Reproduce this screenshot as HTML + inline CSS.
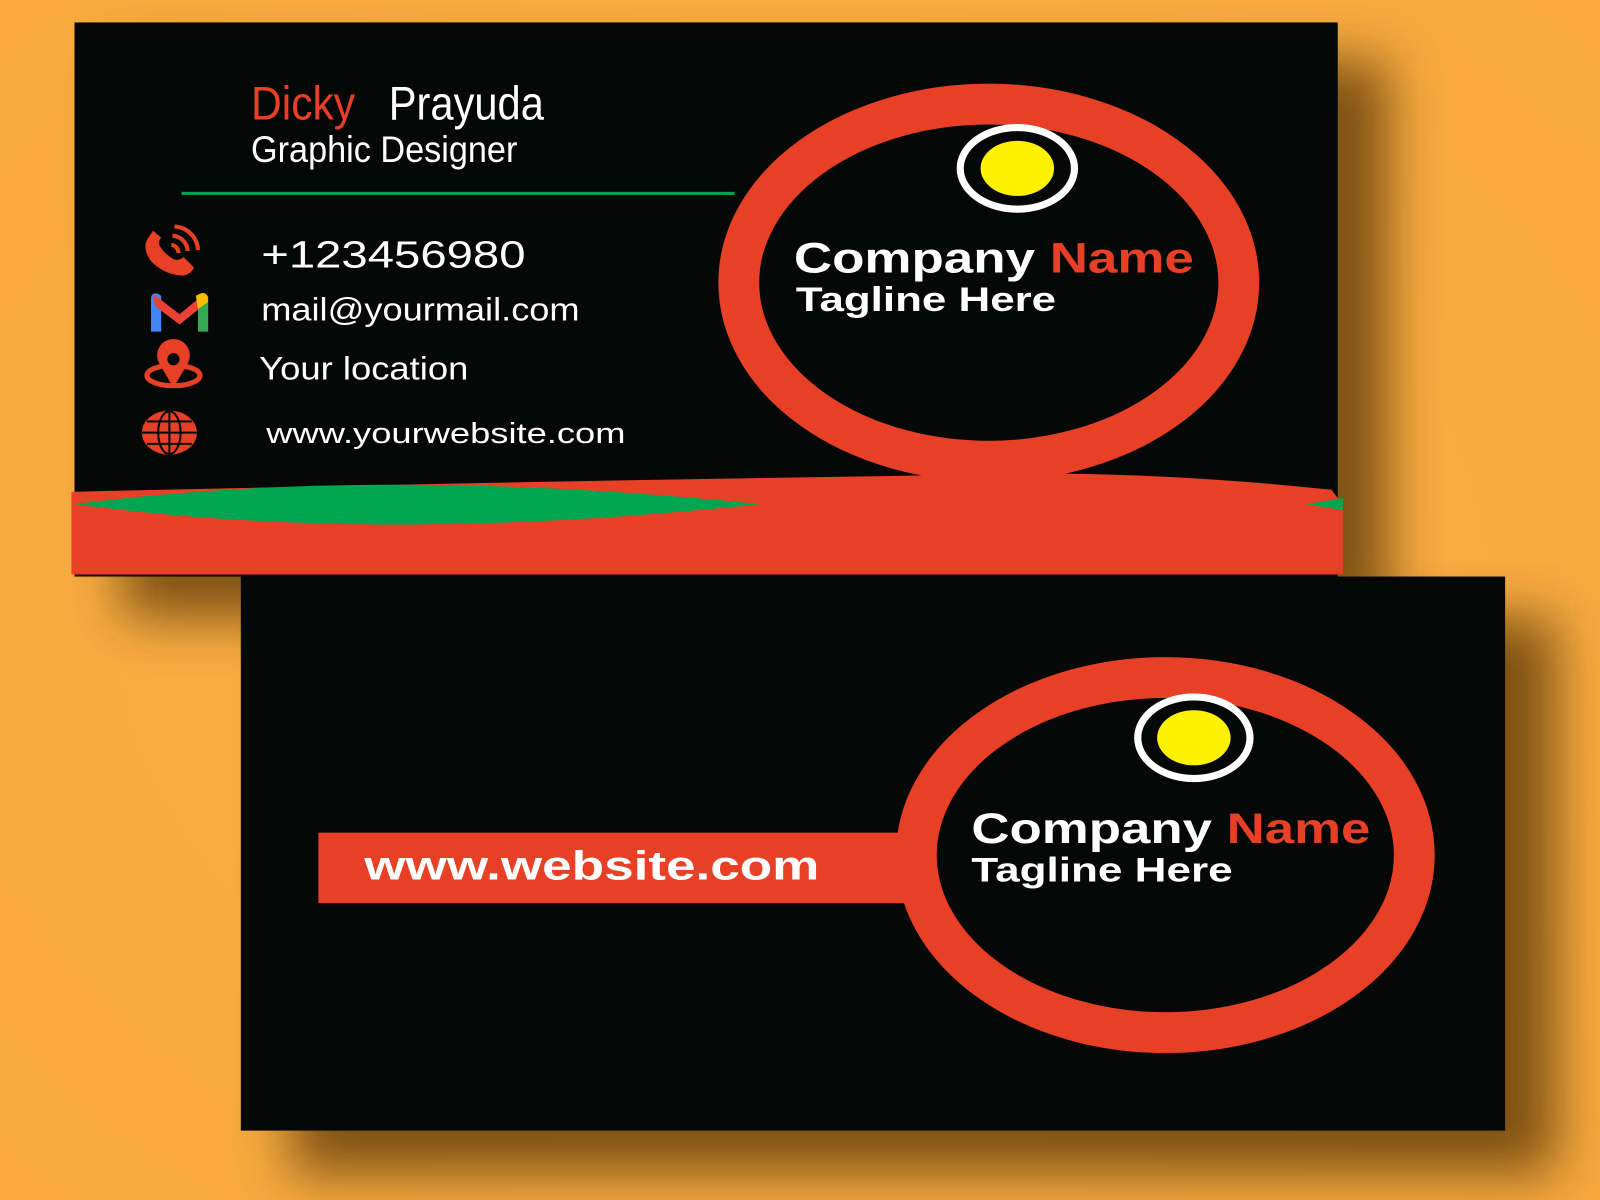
<!DOCTYPE html>
<html><head><meta charset="utf-8"><style>
html,body{margin:0;padding:0;background:#F9AE41;width:1600px;height:1200px;overflow:hidden}
svg{display:block}
</style></head><body>
<svg width="1600" height="1200" viewBox="0 0 1568 1176" xmlns="http://www.w3.org/2000/svg" font-family="'Liberation Sans', sans-serif">
<defs>
<filter id="sh" x="-10%" y="-10%" width="130%" height="140%"><feGaussianBlur stdDeviation="26"/></filter>
<radialGradient id="bg" cx="50%" cy="50%" r="70%"><stop offset="0" stop-color="#FBB045"/><stop offset="1" stop-color="#F7A93E"/></radialGradient>
</defs>
<rect width="1568" height="1176" fill="url(#bg)"/>
<!-- shadows -->
<rect x="120" y="60" width="1240" height="545" fill="#4a2a00" opacity="0.7" filter="url(#sh)"/>
<rect x="285" y="605" width="1240" height="545" fill="#4a2a00" opacity="0.7" filter="url(#sh)"/>

<!-- bottom card -->
<rect x="236" y="565" width="1239" height="543" fill="#050806"/>
<rect x="312" y="816" width="590" height="69" fill="#E84026"/>
<ellipse cx="1142" cy="838" rx="244" ry="174" fill="#050806" stroke="#E84026" stroke-width="40"/>
<ellipse cx="1170" cy="723" rx="55" ry="40" fill="#050806" stroke="#fff" stroke-width="7"/>
<ellipse cx="1170" cy="723" rx="36" ry="27" fill="#FFF200"/>
<text x="952" y="826" font-size="42" font-weight="bold" fill="#fff" textLength="391" lengthAdjust="spacingAndGlyphs">Company <tspan fill="#E84026">Name</tspan></text>
<text x="952" y="864" font-size="34" font-weight="bold" fill="#fff" textLength="256" lengthAdjust="spacingAndGlyphs">Tagline Here</text>
<text x="357" y="862" font-size="40" font-weight="bold" fill="#fff" textLength="446" lengthAdjust="spacingAndGlyphs">www.website.com</text>

<!-- top card -->
<rect x="73" y="22" width="1238" height="543" fill="#050806"/>
<ellipse cx="969" cy="277" rx="245" ry="175" fill="#050806" stroke="#E84026" stroke-width="40"/>
<path d="M70 482 Q500 472 900 466 Q1100 458 1305 480 L1316 495 L1316 563 L70 563 Z" fill="#E84026"/>
<path d="M73 494 Q370 456 745 494 Q370 534 73 494 Z" fill="#00A651"/>
<path d="M1316 488 L1316 500 L1280 494 Z" fill="#00A651"/>
<ellipse cx="997" cy="165" rx="56" ry="40" fill="#050806" stroke="#fff" stroke-width="7"/>
<ellipse cx="997" cy="165" rx="36" ry="27" fill="#FFF200"/>
<text x="778" y="267" font-size="42" font-weight="bold" fill="#fff" textLength="392" lengthAdjust="spacingAndGlyphs">Company <tspan fill="#E84026">Name</tspan></text>
<text x="780" y="305" font-size="34" font-weight="bold" fill="#fff" textLength="255" lengthAdjust="spacingAndGlyphs">Tagline Here</text>

<g>
<text x="246" y="117" font-size="46" fill="#E84026" textLength="102" lengthAdjust="spacingAndGlyphs">Dicky</text>
<text x="381" y="117" font-size="46" fill="#fff" textLength="152" lengthAdjust="spacingAndGlyphs">Prayuda</text>
<text x="246" y="159" font-size="36" fill="#fff" textLength="261" lengthAdjust="spacingAndGlyphs">Graphic  Designer</text>
</g>
<rect x="178" y="188" width="542" height="3" fill="#00A651"/>

<text x="256" y="262" font-size="37" fill="#fff" textLength="259" lengthAdjust="spacingAndGlyphs">+123456980</text>
<text x="256" y="314" font-size="32" fill="#fff" textLength="312" lengthAdjust="spacingAndGlyphs">mail@yourmail.com</text>
<text x="254" y="372" font-size="32" fill="#fff" textLength="205" lengthAdjust="spacingAndGlyphs">Your location</text>
<text x="261" y="434" font-size="28" fill="#fff" textLength="352" lengthAdjust="spacingAndGlyphs">www.yourwebsite.com</text>

<!-- phone icon -->
<g fill="#E84026" stroke="#E84026">
<path d="M146 232 Q138 242 148 256 Q162 270 180 270 Q188 268 190 262 L180 252 Q175 256 170 254 Q160 248 156 240 Q155 236 158 233 L150 226 Z" stroke="none"/>
<path d="M168 240 A8 8 0 0 1 175 248" fill="none" stroke-width="4"/>
<path d="M169 231 A16 16 0 0 1 184 246" fill="none" stroke-width="4"/>
<path d="M171 222 A24 24 0 0 1 194 245" fill="none" stroke-width="4"/>
</g>
<!-- gmail -->
<path d="M148 293 Q148 286 155 288 L158 290 L158 325 L148 325 Z" fill="#4285F4"/>
<path d="M194 290 L204 290 L204 325 L194 325 Z" fill="#34A853"/>
<path d="M150 288 L176 308 L200 288 L196 302 L176 318 L152 300 Z" fill="#EA4335"/>
<path d="M192 290 Q204 282 204 296 L194 303 Z" fill="#FBBC04"/>
<!-- location -->
<ellipse cx="170" cy="368" rx="26" ry="10" fill="none" stroke="#E84026" stroke-width="5"/>
<path d="M170 380 L156 356 A16 16 0 1 1 184 356 Z" fill="#E84026"/>
<circle cx="170" cy="352" r="6" fill="#050806"/>
<!-- globe -->
<circle cx="166" cy="424" r="27" fill="#E84026" transform="translate(166 424) scale(1 0.8) translate(-166 -424)"/>
<g fill="none" stroke="#050806" stroke-width="2">
<ellipse cx="166" cy="424" rx="11" ry="21"/>
<line x1="166" y1="403" x2="166" y2="445"/>
<line x1="139" y1="424" x2="193" y2="424"/>
<line x1="144" y1="413" x2="188" y2="413"/>
<line x1="144" y1="435" x2="188" y2="435"/>
</g>
</svg>
</body></html>
